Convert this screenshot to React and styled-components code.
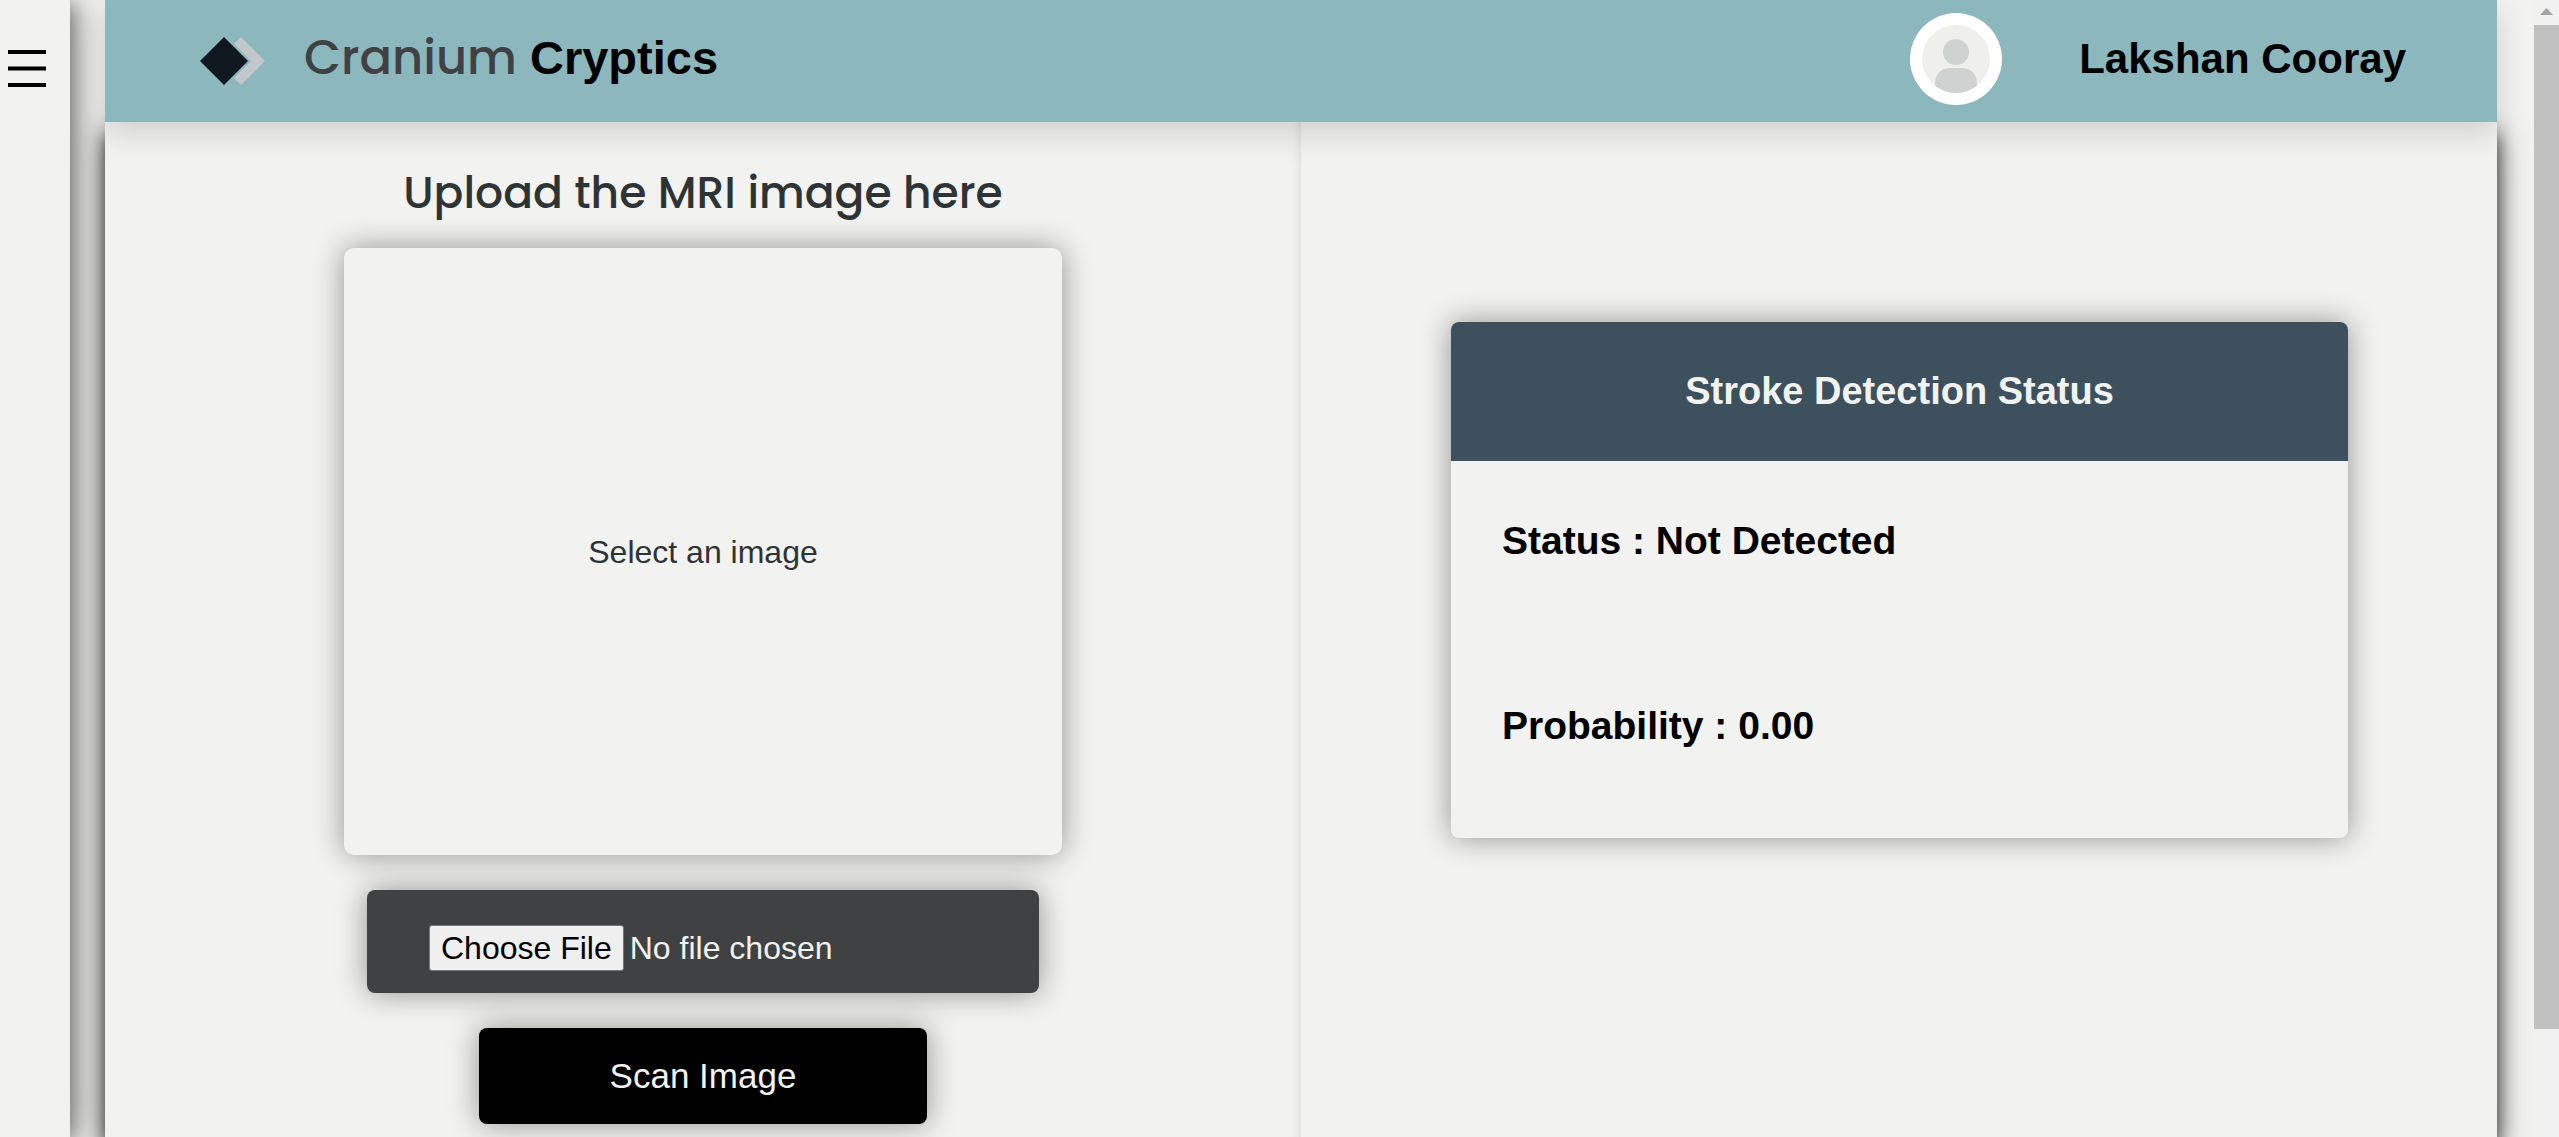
import React from 'react';
import styled, { createGlobalStyle } from 'styled-components';

const GlobalStyle = createGlobalStyle`
  * { box-sizing: border-box; }
  html, body, #root { height: 100%; }
  body {
    margin: 0;
    overflow: hidden;
    background: #f2f2f0;
    color: #000;
    font-family: Arial, "Liberation Sans", sans-serif;
  }
  h1, h2, p { margin: 0; }
`;

const Page = styled.div`
  display: flex;
  height: 100vh;
  overflow: hidden;
`;

const Sidebar = styled.aside`
  flex: 0 0 70px;
  padding: 42px 0 0 8px;
  background: #f2f2f0;
  box-shadow: 4px 4px 20px rgba(0, 0, 0, 0.45), 8px 0 40px rgba(0, 0, 0, 0.2);
`;

const MenuButton = styled.button`
  display: block;
  padding: 0;
  border: 0;
  background: none;
  cursor: pointer;
  svg { display: block; }
`;

const Main = styled.div`
  flex: 1;
  display: flex;
  flex-direction: column;
  min-width: 0;
  margin: 0 37px 0 35px;
`;

const Header = styled.header`
  position: relative;
  z-index: 1;
  display: flex;
  align-items: center;
  justify-content: space-between;
  height: 122px;
  padding: 0 91px 0 95px;
  background: #8cb7bc;
  box-shadow: 0 10px 30px rgba(0, 0, 0, 0.15);
`;

const Brand = styled.div`
  display: flex;
  align-items: center;
  gap: 38px;
`;

const BrandName = styled.h1`
  padding-bottom: 6px;
  font-size: 47px;
  line-height: 64px;
  font-weight: 700;
`;

const BrandAccent = styled.span`
  color: #404142;
  font-family: Poppins, Inter, sans-serif;
  font-size: 48px;
  font-weight: 500;
`;

const User = styled.div`
  display: flex;
  align-items: center;
  gap: 77px;
  padding-bottom: 4px;
  font-size: 42px;
  line-height: 48px;
  font-weight: 700;
`;

const Content = styled.main`
  flex: 1;
  display: grid;
  grid-template-columns: 1fr 1fr;
  background: #f2f2f0;
  box-shadow: 0 12px 20px rgba(0, 0, 0, 0.9), 0 12px 40px rgba(0, 0, 0, 0.2);
`;

const UploadPanel = styled.section`
  display: flex;
  flex-direction: column;
  align-items: center;
  padding-top: 39px;
  box-shadow: inset -12px 0 12px -12px rgba(0, 0, 0, 0.12);
`;

const Title = styled.h2`
  margin-bottom: 23px;
  color: #2d3436;
  font-family: Poppins, Inter, sans-serif;
  font-size: 44px;
  line-height: 64px;
  font-weight: 500;
`;

const raised = '0 0 30px rgba(0, 0, 0, 0.4)';

const Preview = styled.div`
  display: flex;
  align-items: center;
  justify-content: center;
  width: 60%;
  height: 607px;
  border-radius: 10px;
  background: #f2f2f0;
  box-shadow: ${raised};
  color: #2d3436;
  font-size: 32px;
  line-height: 36px;
`;

const FileBox = styled.div`
  width: 672px;
  height: 103px;
  margin-top: 35px;
  padding: 35px 62px 0;
  border-radius: 8px;
  background: #404142;
  box-shadow: ${raised};
`;

const FileInput = styled.input`
  display: block;
  width: 100%;
  color: #f2f2f0;
  font: 32px/36px Arial, "Liberation Sans", sans-serif;
  &::file-selector-button {
    height: 46px;
    margin-right: 6px;
    padding: 0 11px;
    border: 1px solid #767676;
    border-radius: 3px;
    background: #efefef;
    color: #000;
    font: inherit;
  }
`;

const ScanButton = styled.button`
  width: 448px;
  height: 96px;
  margin-top: 35px;
  border: 0;
  border-radius: 8px;
  background: #000;
  box-shadow: ${raised};
  color: #f2f2f0;
  font: 35px/40px Arial, "Liberation Sans", sans-serif;
`;

const ResultPanel = styled.section`
  padding: 200px 149px 0 150px;
`;

const ResultCard = styled.article`
  height: 516px;
  overflow: hidden;
  border-radius: 8px;
  box-shadow: ${raised};
`;

const ResultTitle = styled.h2`
  padding: 47px 0 48px;
  background: #3c505e;
  color: #f2f2f0;
  font-size: 38px;
  line-height: 44px;
  text-align: center;
`;

const ResultBody = styled.div`
  display: grid;
  gap: 141px;
  padding: 58px 51px;
  font-size: 39px;
  line-height: 44px;
  font-weight: 700;
`;

const ScrollTrack = styled.div`
  flex: 0 0 25px;
  background: #f1f1f1;
  svg { display: block; }
`;

const ScrollThumb = styled.div`
  height: 1004px;
  background: #c1c1c1;
`;

const Logo = () => (
  <svg width="66" height="48" viewBox="0 0 66 48" aria-hidden="true">
    <path d="M34 7 41 0 65 24 41 48 34 41 51 24Z" fill="#c2c7ca" />
    <path d="M24 0 48 24 24 48 0 24Z" fill="#101920" />
  </svg>
);

const Avatar = () => (
  <svg width="92" height="92" viewBox="0 0 92 92" role="img" aria-label="Profile">
    <clipPath id="face"><circle cx="46" cy="46" r="34" /></clipPath>
    <circle cx="46" cy="46" r="46" fill="#fff" />
    <circle cx="46" cy="46" r="34" fill="#efefed" />
    <g clipPath="url(#face)" fill="#d0d2d1">
      <circle cx="46" cy="39" r="13" />
      <path d="M25 80V71C25 61 31 55 40 55H52C61 55 67 61 67 71V80Z" />
    </g>
  </svg>
);

export default function App() {
  return (
    <>
      <GlobalStyle />
      <Page>
        <Sidebar>
          <MenuButton aria-label="Open menu">
            <svg width="39" height="54" viewBox="0 0 39 54">
              <path d="M0 10H38M0 26.500H38M0 43H38" stroke="#000" strokeWidth="4" />
            </svg>
          </MenuButton>
        </Sidebar>
        <Main>
          <Header>
            <Brand>
              <Logo />
              <BrandName><BrandAccent>Cranium</BrandAccent> Cryptics</BrandName>
            </Brand>
            <User><Avatar /><span>Lakshan Cooray</span></User>
          </Header>
          <Content>
            <UploadPanel>
              <Title>Upload the MRI image here</Title>
              <Preview>Select an image</Preview>
              <FileBox><FileInput type="file" accept="image/*" aria-label="MRI image" /></FileBox>
              <ScanButton>Scan Image</ScanButton>
            </UploadPanel>
            <ResultPanel>
              <ResultCard>
                <ResultTitle>Stroke Detection Status</ResultTitle>
                <ResultBody>
                  <p>Status : Not Detected</p>
                  <p>Probability : 0.00</p>
                </ResultBody>
              </ResultCard>
            </ResultPanel>
          </Content>
        </Main>
        <ScrollTrack aria-hidden="true">
          <svg width="25" height="25" viewBox="0 0 25 25"><path d="M6 15 12.500 8 19 15Z" fill="#a3a3a3" /></svg>
          <ScrollThumb />
        </ScrollTrack>
      </Page>
    </>
  );
}
